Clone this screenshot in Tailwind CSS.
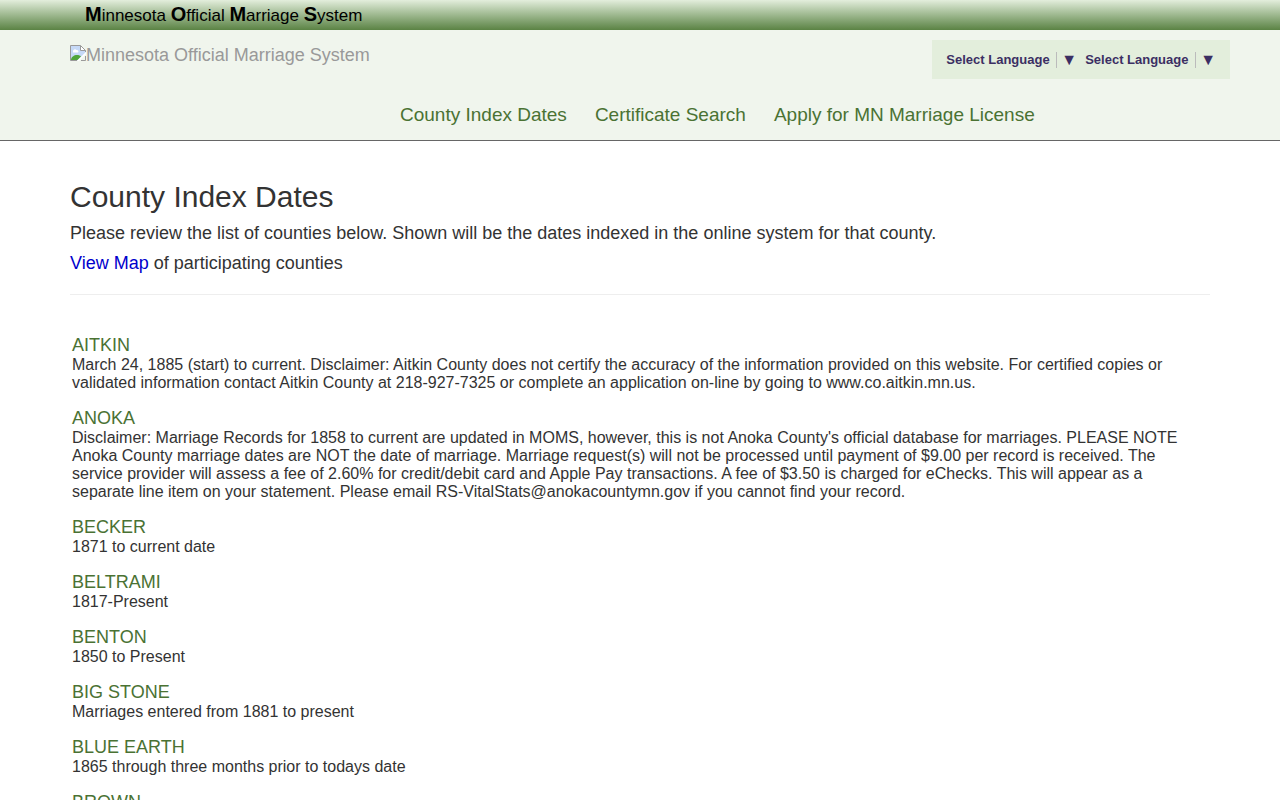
<!DOCTYPE html>
<html lang="en">
  <head>
    <meta charset="utf-8" />
    <meta name="viewport" content="width=device-width, initial-scale=1" />
    <title>Minnesota Official Marriage System</title>
    <script src="https://cdn.jsdelivr.net/npm/@tailwindcss/browser@4"></script>
  </head>
  <body class="bg-white font-['Liberation_Sans',Arial,sans-serif] text-base text-[#333]">
    <div class="h-[30px] bg-linear-to-b from-[#e3eedc] to-[#5b8344] text-black">
      <div class="max-w-[1170px] mx-auto px-[30px] text-[17px] leading-7">
        <b class="text-xl leading-7">M</b>innesota <b class="text-xl leading-7">O</b>fficial
        <b class="text-xl leading-7">M</b>arriage <b class="text-xl leading-7">S</b>ystem
      </div>
    </div>

    <header class="bg-[#f0f5ed] border-b border-[#666]">
      <div class="max-w-[1170px] mx-auto pl-[15px]">
        <div class="flex justify-between items-start pt-2.5">
          <a href="#" class="flex items-start pt-[5px] text-lg leading-5 text-[#999]">
            <svg class="w-4 h-4 shrink-0" viewBox="0 0 16 16" aria-hidden="true">
              <path d="M.5.5h10l5 5v2l-8 8h-7z" fill="#c6d9f7" />
              <path d="M3 6.500a2 2 0 0 1 3.500-1.500a1.500 1.500 0 0 1 1.500 2.500H3z" fill="#fff" />
              <path d="M1 15c0-3 3-5 6-5 2 0 3 .5 4 1.500L7.500 15z" fill="#4fa53b" />
              <path d="M10.500.5v5h5z" fill="#fff" />
              <path d="M15.500 7V5.500l-5-5H.5v15H7M10.500.5v5h5M11 15.500h4.500V11" fill="none" stroke="#9a9a9a" />
              <path d="M16 7v2l-7 7H7z" fill="#fff" />
            </svg>
            Minnesota Official Marriage System
          </a>
          <div class="flex gap-2 bg-[#e3eedc] px-3.5 h-[39px] items-center -mr-[5px] text-[13px] font-bold text-[#3b2f63]">
            <label class="flex items-center">
              <select aria-label="Select language" class="appearance-none font-bold">
                <option>Select Language</option>
              </select>
              <span class="border-l border-[#bbb] ml-1.5 pl-1 text-base leading-4" aria-hidden="true">▼</span>
            </label>
            <label class="flex items-center">
              <select aria-label="Select language" class="appearance-none font-bold">
                <option>Select Language</option>
              </select>
              <span class="border-l border-[#bbb] ml-1.5 pl-1 text-base leading-4" aria-hidden="true">▼</span>
            </label>
          </div>
        </div>
        <nav class="flex gap-7 pt-[26px] pb-[15px] ml-[330px] text-[19px] leading-5 text-[#4a7233]">
          <a href="#" class="hover:underline">County Index Dates</a>
          <a href="#" class="hover:underline">Certificate Search</a>
          <a href="#" class="hover:underline">Apply for MN Marriage License</a>
        </nav>
      </div>
    </header>

    <main class="max-w-[1170px] mx-auto px-[15px] pt-10">
      <h1 class="text-3xl leading-8">County Index Dates</h1>
      <p class="text-lg leading-5 mt-2.5">
        Please review the list of counties below. Shown will be the dates indexed in the online system for that county.
      </p>
      <p class="text-lg leading-5 mt-2.5">
        <a href="#" class="text-[#0000cc] hover:underline">View Map</a> of participating counties
      </p>
      <hr class="border-[#eee] mt-[21px] mb-10" />

      <dl class="px-0.5 leading-[18px]">
        <dt class="text-lg leading-[21px] text-[#4a7233]">AITKIN</dt>
        <dd class="mb-4">
          March 24, 1885 (start) to current. Disclaimer: Aitkin County does not certify the accuracy of the information
          provided on this website. For certified copies or validated information contact Aitkin County at 218-927-7325
          or complete an application on-line by going to www.co.aitkin.mn.us.
        </dd>
        <dt class="text-lg leading-[21px] text-[#4a7233]">ANOKA</dt>
        <dd class="mb-4">
          Disclaimer: Marriage Records for 1858 to current are updated in MOMS, however, this is not Anoka County's
          official database for marriages. PLEASE NOTE Anoka County marriage dates are NOT the date of marriage.
          Marriage request(s) will not be processed until payment of $9.00 per record is received. The service provider
          will assess a fee of 2.60% for credit/debit card and Apple Pay transactions. A fee of $3.50 is charged for
          eChecks. This will appear as a separate line item on your statement. Please email
          RS-VitalStats@anokacountymn.gov if you cannot find your record.
        </dd>
        <dt class="text-lg leading-[21px] text-[#4a7233]">BECKER</dt>
        <dd class="mb-4">1871 to current date</dd>
        <dt class="text-lg leading-[21px] text-[#4a7233]">BELTRAMI</dt>
        <dd class="mb-4">1817-Present</dd>
        <dt class="text-lg leading-[21px] text-[#4a7233]">BENTON</dt>
        <dd class="mb-4">1850 to Present</dd>
        <dt class="text-lg leading-[21px] text-[#4a7233]">BIG STONE</dt>
        <dd class="mb-4">Marriages entered from 1881 to present</dd>
        <dt class="text-lg leading-[21px] text-[#4a7233]">BLUE EARTH</dt>
        <dd class="mb-4">1865 through three months prior to todays date</dd>
        <dt class="text-lg leading-[21px] text-[#4a7233]">BROWN</dt>
      </dl>
    </main>
  </body>
</html>
